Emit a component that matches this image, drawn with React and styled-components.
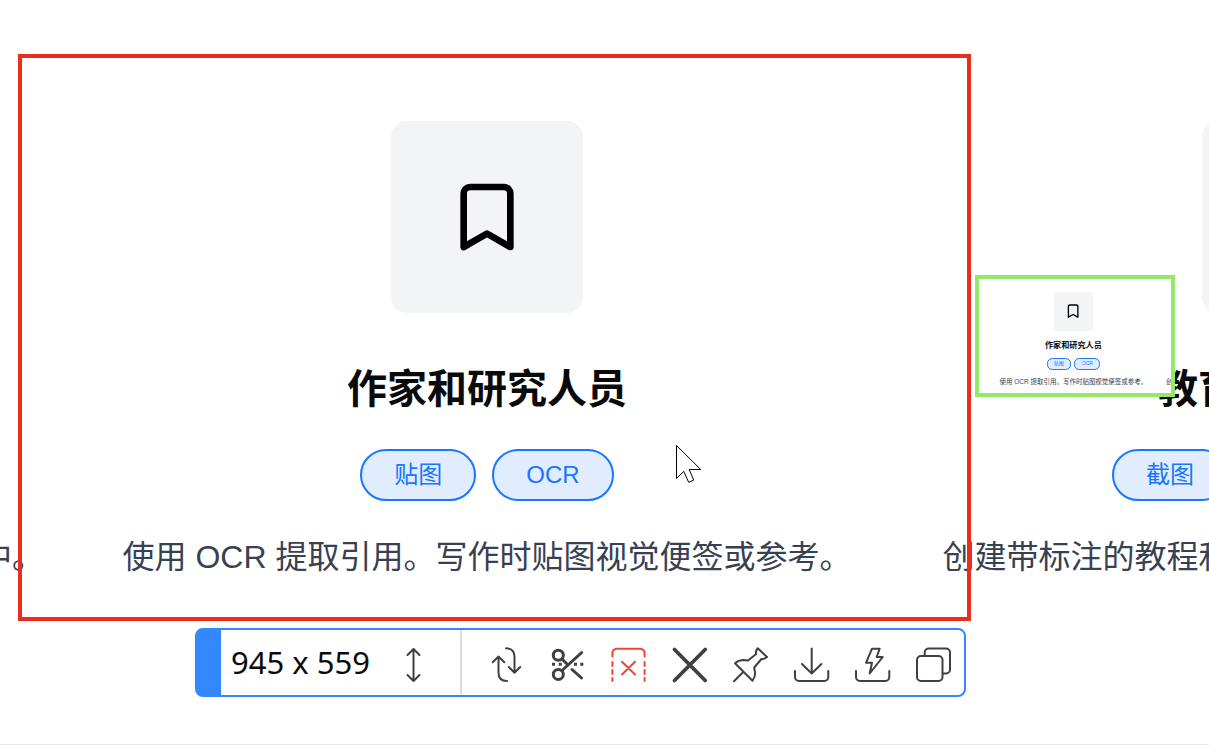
import React from "react";
import styled, { createGlobalStyle } from "styled-components";

const GlobalStyle = createGlobalStyle`
  *, *::before, *::after { box-sizing: border-box; }
  body {
    margin: 0;
    background: #ffffff;
    font-family: "Liberation Sans", "Noto Sans CJK SC", sans-serif;
  }
`;

const Page = styled.main`
  position: relative;
  overflow: hidden;
  padding: 121px 235px 163px 0;
  border-bottom: 1px solid #e5e7eb;
`;

const CardTrack = styled.div`
  display: flex;
  justify-content: center;
`;

const Card = styled.article`
  flex: 0 0 811px;
  display: flex;
  flex-direction: column;
  align-items: center;
`;

const IconTile = styled.div`
  display: grid;
  place-items: center;
  width: 192px;
  height: 192px;
  margin-bottom: 48px;
  border-radius: 16px;
  background: #f3f4f6;
`;

const CardTitle = styled.h3`
  margin: 0 0 32px;
  color: #0a0a0a;
  font-size: 40px;
  font-weight: 700;
  line-height: 56px;
  white-space: nowrap;
`;

const TagList = styled.div`
  display: flex;
  gap: 16px;
  margin-bottom: 32px;
`;

const Tag = styled.span`
  padding: 0 32px;
  border: 2px solid #1677ff;
  border-radius: 26px;
  background: #e1ecff;
  color: #1677ff;
  font-size: 24px;
  line-height: 48px;
  white-space: nowrap;
`;

const CardText = styled.p`
  margin: 0;
  color: #374151;
  font-size: 32px;
  line-height: 48px;
  white-space: nowrap;
`;

const CaptureLayer = styled.div`
  position: absolute;
  top: 54px;
  left: 18px;
  right: 238px;
  display: flex;
  flex-direction: column;
  align-items: flex-end;
  gap: 7px;
`;

const SelectionFrame = styled.div`
  align-self: stretch;
  height: 567px;
  border: 4px solid #e92d1e;
`;

const Preview = styled.div`
  position: absolute;
  top: 221px;
  left: calc(100% + 4px);
  width: 200px;
  height: 122px;
  overflow: hidden;
  border: 4px solid #94e96b;
  background: #ffffff;
`;

const PreviewContent = styled.div`
  zoom: 0.203;
  width: 974px;
  margin-left: -22px;
  padding-top: 63px;
`;

const Toolbar = styled.div`
  display: flex;
  height: 69px;
  margin-right: 5px;
  border: 2px solid #3388ff;
  border-left-width: 26px;
  border-radius: 8px;
  background: #ffffff;
`;

const SizeLabel = styled.output`
  width: 162px;
  padding-left: 10px;
  color: #0a0a0a;
  font-family: "Noto Sans", sans-serif;
  font-size: 31px;
  line-height: 65px;
  white-space: nowrap;
`;

const Divider = styled.div`
  width: 2px;
  margin: 0 14px 1px 16px;
  background: #dcdcdc;
`;

const ToolButton = styled.button`
  width: 61px;
  height: 65px;
  padding: 0;
  border: 0;
  background: transparent;
  color: ${(p) => (p.$danger ? "#f44336" : "#404040")};
  cursor: pointer;
`;

const ToolGlyph = styled.svg`
  display: block;
  fill: none;
  stroke: currentColor;
  stroke-width: ${(p) => p.$weight};
  stroke-linecap: round;
  stroke-linejoin: round;
`;

const Pointer = styled.svg`
  position: absolute;
  top: 445px;
  left: 676px;
`;

const cards = [
  {
    title: "设计师和开发者",
    tags: ["截图", "贴图"],
    text: "快速截取屏幕贴图对比，让灵感始终留在工作流中。",
  },
  {
    title: "作家和研究人员",
    tags: ["贴图", "OCR"],
    text: "使用 OCR 提取引用。写作时贴图视觉便签或参考。",
  },
  {
    title: "教育者和培训师",
    tags: ["截图", "标注", "GIF"],
    text: "创建带标注的教程和 GIF 演示，让学生轻松理解。",
  },
];

const tray = "M14 41v6a4 4 0 0 0 4 4h25.300a4 4 0 0 0 4-4v-6";

const tools = [
  {
    label: "重新选择",
    weight: 2,
    art: (
      <path d="M16.700 32.300l5.800-5.800 5.800 5.800M22.500 26.500V42.500q0 8.500 8.500 8.500M30 18.300q8.500 0 8.500 8.700v15.700M32.800 37l5.700 5.700 5.700-5.700" />
    ),
  },
  {
    label: "剪裁",
    weight: 3,
    art: (
      <>
        <circle cx="21.300" cy="25.200" r="5" />
        <circle cx="21.300" cy="44.400" r="5" />
        <path d="M25 40.500L44.700 22.500M25 29l5.500 5.500M35 39.500l9.500 8.500" />
        <path
          d="M15 34.300h3M21.700 34.300h3M37 34.300h3M43.300 34.300h3"
          strokeLinecap="butt"
        />
      </>
    ),
  },
  {
    label: "取消选区",
    danger: true,
    weight: 2,
    art: (
      <path d="M14.400 26.500v-3.500a4.300 4.300 0 0 1 4.300-4.300h23.600a4.300 4.300 0 0 1 4.300 4.300v3.500M14.400 32v4M14.400 40v4M14.400 48v3M46.600 32v4M46.600 40v4M46.600 48v3M24 31.800l13 12.700M37 31.800l-13 12.700" />
    ),
  },
  { label: "关闭", weight: 3.8, art: <path d="M15.500 19.500l30.700 31M46.200 19.500l-30.700 31" /> },
  {
    label: "钉住",
    weight: 2,
    art: (
      <path d="M14 51.200l9.200-9.200M15 33.300l17.500 17.500q3-4.300 2.500-8l-.800-5.300 7.300-8.500q2.500.500 5.500-2l-9.300-8.800q-2.300 2.500-1.500 5.800L28 30.500l-4.800-.500q-4.500 0-8.200 3.300z" />
    ),
  },
  {
    label: "保存",
    weight: 2,
    art: <path d={`M30.700 18.500v25M21 34l9.700 9.500 9.700-9.500${tray}`} />,
  },
  {
    label: "快速保存",
    weight: 2,
    art: <path d={`M30 18.700h7.700L34.700 27h6L27.700 43.500 30 32.800h-6z${tray}`} />,
  },
  {
    label: "复制",
    weight: 2,
    art: (
      <>
        <rect x="14" y="26" width="25.500" height="25" rx="4" />
        <path d="M21.700 25.500v-3a4 4 0 0 1 4-4H43a4 4 0 0 1 4 4v17a4 4 0 0 1-4 4h-3" />
      </>
    ),
  },
];

function Tool({ label, weight, danger, art }) {
  return (
    <ToolButton type="button" aria-label={label} $danger={danger}>
      <ToolGlyph width="61" height="65" viewBox="0 0 61 65" $weight={weight} aria-hidden="true">
        {art}
      </ToolGlyph>
    </ToolButton>
  );
}

function BookmarkIcon() {
  return (
    <svg
      width="80"
      height="80"
      viewBox="0 0 24 24"
      fill="none"
      stroke="#000000"
      strokeWidth="2"
      strokeLinecap="round"
      strokeLinejoin="round"
      aria-hidden="true"
    >
      <path d="M19 21l-7-4-7 4V5a2 2 0 0 1 2-2h10a2 2 0 0 1 2 2z" />
    </svg>
  );
}

function AudienceCards() {
  return (
    <CardTrack>
      {cards.map((card) => (
        <Card key={card.title}>
          <IconTile>
            <BookmarkIcon />
          </IconTile>
          <CardTitle>{card.title}</CardTitle>
          <TagList>
            {card.tags.map((tag) => (
              <Tag key={tag}>{tag}</Tag>
            ))}
          </TagList>
          <CardText>{card.text}</CardText>
        </Card>
      ))}
    </CardTrack>
  );
}

export default function App() {
  return (
    <>
      <GlobalStyle />
      <Page>
        <AudienceCards />
        <CaptureLayer>
          <SelectionFrame />
          <Toolbar role="toolbar" aria-label="截图工具">
            <SizeLabel>945 x 559</SizeLabel>
            <Tool
              label="调整大小"
              weight={2}
              art={<path d="M30.500 19v32M24.500 25l6-6 6 6M24.500 45l6 6 6-6" />}
            />
            <Divider />
            {tools.map((tool) => (
              <Tool key={tool.label} {...tool} />
            ))}
          </Toolbar>
          <Preview aria-hidden="true">
            <PreviewContent>
              <AudienceCards />
            </PreviewContent>
          </Preview>
        </CaptureLayer>
        <Pointer width="26" height="39" viewBox="0 0 26 39" aria-hidden="true">
          <path
            d="M.5 .5V33.500L7.700 26.300l5 11 5-2.200-4.500-10.600h11.500z"
            fill="#ffffff"
            stroke="#000000"
          />
        </Pointer>
      </Page>
    </>
  );
}
